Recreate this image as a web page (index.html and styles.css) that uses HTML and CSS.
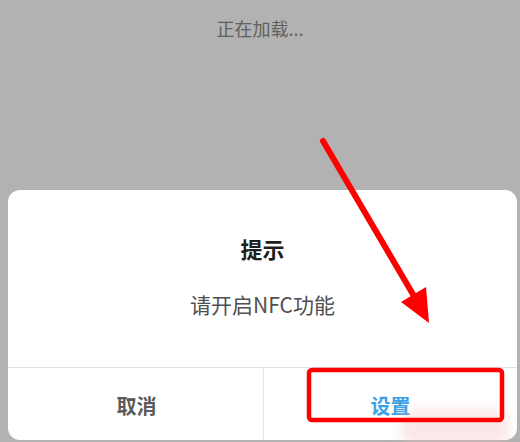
FILE: index.html
```html
<!DOCTYPE html>
<html lang="zh-CN">

<head>
  <meta charset="UTF-8">
  <meta name="viewport" content="width=device-width, initial-scale=1.0">
  <title>提示</title>
  <link rel="stylesheet" href="styles.css">
</head>

<body>
  <div class="screen">
    <div class="loading">正在加载...</div>

    <div class="dialog">
      <div class="dialog-body">
        <div class="dialog-title">提示</div>
        <div class="dialog-message">请开启NFC功能</div>
      </div>
      <div class="dialog-buttons">
        <div class="dialog-button cancel">取消</div>
        <div class="dialog-button confirm">设置</div>
      </div>
    </div>

    <div class="smudge"></div>

    <svg class="annotation" width="520" height="442" viewBox="0 0 520 442">
      <line x1="323" y1="141" x2="421" y2="308" stroke="#ff0000" stroke-width="6" stroke-linecap="round" />
      <polygon points="429,323 401,302 426,287" fill="#ff0000" />
      <rect x="309" y="370" width="193" height="50" rx="3" fill="none" stroke="#ff0000" stroke-width="4.5" />
    </svg>
  </div>
</body>

</html>
```

FILE: styles.css
```css
body {
  margin: 0;
  font-family: "Noto Sans CJK SC", "Noto Sans", sans-serif;
}

.screen {
  position: relative;
  width: 520px;
  height: 442px;
  background-color: #b2b2b2;
  overflow: hidden;
  display: flex;
  flex-direction: column;
  align-items: center;
}

.loading {
  margin-top: 16px;
  font-size: 18px;
  line-height: 24px;
  color: #606060;
}

.dialog {
  box-sizing: border-box;
  margin-top: 150px;
  align-self: flex-start;
  margin-left: 8px;
  width: 509px;
  height: 250px;
  background-color: #ffffff;
  border-radius: 12px;
  display: flex;
  flex-direction: column;
  overflow: hidden;
}

.dialog-body {
  height: 177px;
  display: flex;
  flex-direction: column;
  align-items: center;
  border-bottom: 1px solid #e2e2e2;
}

.dialog-title {
  margin-top: 43px;
  font-size: 22px;
  line-height: 30px;
  font-weight: bold;
  color: #1e1e1e;
}

.dialog-message {
  margin-top: 27px;
  font-size: 21px;
  line-height: 28px;
  color: #505050;
}

.dialog-button {
  flex: 1;
  display: flex;
  justify-content: center;
  align-items: center;
  padding-top: 2px;
  font-size: 20px;
  font-weight: bold;
}

.dialog-buttons {
  flex: 1;
  display: flex;
}

.cancel {
  color: #5a5a5a;
  border-right: 1px solid #e6e6e6;
  margin-left: 2px;
}

.confirm {
  color: #3d9fe6;
}

.smudge {
  position: absolute;
  left: 400px;
  top: 408px;
  width: 110px;
  height: 40px;
  background: rgba(240, 190, 190, 0.35);
  filter: blur(6px);
  border-radius: 20px;
}

.annotation {
  position: absolute;
  left: 0;
  top: 0;
}
```
